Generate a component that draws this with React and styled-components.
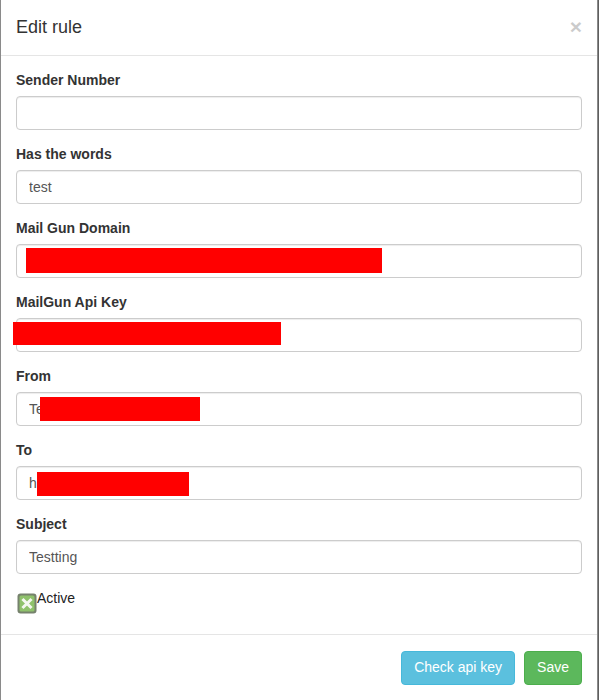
import React from 'react';
import styled, { createGlobalStyle } from 'styled-components';

const GlobalStyle = createGlobalStyle`
  html, body {
    margin: 0;
    padding: 0;
    background: #5f5f5f;
  }
  body {
    font-family: "Liberation Sans", Arial, Helvetica, sans-serif;
    font-size: 14px;
    line-height: 1.42857;
    color: #333;
  }
  * {
    box-sizing: border-box;
  }
`;

const Modal = styled.div`
  width: 598px;
  height: 700px;
  background: #fff;
  border-left: 1px solid #8a8a8a;
  border-right: 1px solid #8a8a8a;
`;

const Header = styled.div`
  display: flex;
  align-items: center;
  justify-content: space-between;
  padding: 15px;
  border-bottom: 1px solid #e5e5e5;
`;

const Title = styled.h4`
  margin: 0;
  font-size: 18px;
  font-weight: 500;
  line-height: 25px;
  color: #333;
`;

const Close = styled.button`
  border: 0;
  background: transparent;
  padding: 0;
  font-family: "Liberation Sans", Arial, sans-serif;
  font-size: 21px;
  font-weight: 700;
  line-height: 1;
  color: #000;
  opacity: 0.2;
  margin-top: -2px;
  cursor: pointer;
`;

const Body = styled.div`
  padding: 15px;
`;

const Group = styled.div`
  margin-bottom: 15px;
`;

const Label = styled.label`
  display: block;
  margin-bottom: 5px;
  font-weight: 700;
  color: #333;
`;

const Field = styled.div`
  position: relative;
`;

const Input = styled.input`
  display: block;
  width: 100%;
  height: 34px;
  padding: 6px 12px;
  font-family: inherit;
  font-size: 14px;
  line-height: 1.42857;
  color: #555;
  background: #fff;
  border: 1px solid #ccc;
  border-radius: 4px;
  box-shadow: inset 0 1px 1px rgba(0, 0, 0, 0.075);
  outline: none;
`;

const Redact = styled.div`
  position: absolute;
  background: #ff0000;
`;

const CheckRow = styled.div`
  display: flex;
  align-items: flex-start;
  margin-top: 10px;
  margin-bottom: 10px;
  height: 20px;
`;

const CheckBox = styled.span`
  display: inline-flex;
  margin: 4px 0 0 1px;
`;

const CheckLabel = styled.span`
  font-weight: 400;
  color: #222;
`;

const Footer = styled.div`
  display: flex;
  justify-content: flex-end;
  gap: 9px;
  padding: 16px 15px 15px;
  border-top: 1px solid #e5e5e5;
`;

const Button = styled.button`
  height: 34px;
  padding: 6px 12px;
  font-family: inherit;
  font-size: 14px;
  line-height: 1.42857;
  color: #fff;
  border-radius: 4px;
  border: 1px solid ${(p) => (p.$variant === 'success' ? '#4cae4c' : '#46b8da')};
  background: ${(p) => (p.$variant === 'success' ? '#5cb85c' : '#5bc0de')};
  cursor: pointer;
`;

const fields = [
  { label: 'Sender Number', value: '' },
  { label: 'Has the words', value: 'test' },
  { label: 'Mail Gun Domain', value: '', redact: { left: 10, top: 4, width: 356, height: 25 } },
  { label: 'MailGun Api Key', value: '', redact: { left: -3, top: 4, width: 268, height: 23 } },
  { label: 'From', value: 'Te', redact: { left: 24, top: 5, width: 160, height: 24 } },
  { label: 'To', value: 'h', redact: { left: 21, top: 6, width: 152, height: 24 } },
  { label: 'Subject', value: 'Testting' },
];

function CheckIcon() {
  return (
    <svg width="20" height="21" viewBox="0 0 20 21">
      <rect x="0.5" y="0.5" width="19" height="20" rx="3" fill="#76826d" />
      <rect x="2.5" y="2.5" width="15" height="16" rx="1.5" fill="#8fc26c" />
      <path d="M6.5 7 L13.5 14 M13.5 7 L6.5 14" stroke="#f4f8f0" strokeWidth="3" strokeLinecap="square" />
    </svg>
  );
}

export default function App() {
  return (
    <>
      <GlobalStyle />
      <Modal>
        <Header>
          <Title>Edit rule</Title>
          <Close type="button">×</Close>
        </Header>
        <Body>
          {fields.map((f) => (
            <Group key={f.label}>
              <Label>{f.label}</Label>
              <Field>
                <Input type="text" defaultValue={f.value} />
                {f.redact && <Redact style={f.redact} />}
              </Field>
            </Group>
          ))}
          <CheckRow>
            <CheckBox>
              <CheckIcon />
            </CheckBox>
            <CheckLabel>Active</CheckLabel>
          </CheckRow>
        </Body>
        <Footer>
          <Button type="button">Check api key</Button>
          <Button type="button" $variant="success">Save</Button>
        </Footer>
      </Modal>
    </>
  );
}
